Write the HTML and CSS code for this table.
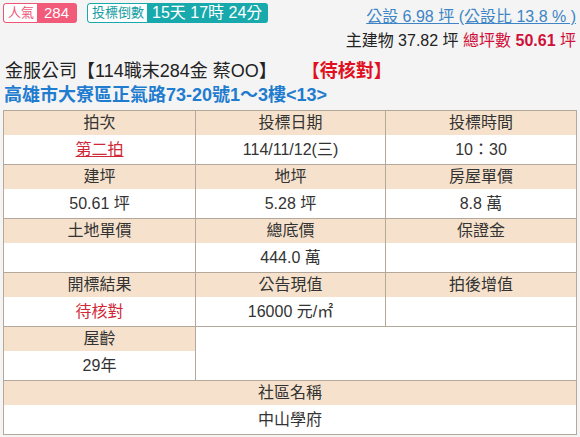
FILE: index.html
```html
<!DOCTYPE html>
<html lang="zh-Hant">
<head>
<meta charset="utf-8">
<link rel="stylesheet" href="styles.css">
</head>
<body>
<div class="top">
  <div class="badges">
    <span class="badge pink"><span class="lbl">人氣</span><span class="val">284</span></span>
    <span class="badge teal"><span class="lbl">投標倒數</span><span class="val">15天 17時 24分</span></span>
  </div>
  <div class="area">
    <div class="pub"><a href="#">公設 6.98 坪 (公設比 13.8 % )</a></div>
    <div class="main">主建物 37.82 坪 <span class="red">總坪數 <b>50.61</b> 坪</span></div>
  </div>
</div>
<div class="title">金服公司【114職末284金 蔡OO】 <span class="status">【待核對】</span></div>
<div class="addr">高雄市大寮區正氣路73-20號1～3樓&lt;13&gt;</div>
<div class="grid">
  <div class="cell"><div class="h">拍次</div><div class="v"><a class="link" href="#">第二拍</a></div></div>
  <div class="cell"><div class="h">投標日期</div><div class="v">114/11/12(三)</div></div>
  <div class="cell"><div class="h">投標時間</div><div class="v">10：30</div></div>
  <div class="cell"><div class="h">建坪</div><div class="v">50.61 坪</div></div>
  <div class="cell"><div class="h">地坪</div><div class="v">5.28 坪</div></div>
  <div class="cell"><div class="h">房屋單價</div><div class="v">8.8 萬</div></div>
  <div class="cell"><div class="h">土地單價</div><div class="v"></div></div>
  <div class="cell"><div class="h">總底價</div><div class="v">444.0 萬</div></div>
  <div class="cell"><div class="h">保證金</div><div class="v"></div></div>
  <div class="cell"><div class="h">開標結果</div><div class="v redtxt">待核對</div></div>
  <div class="cell"><div class="h">公告現值</div><div class="v">16000 元/㎡</div></div>
  <div class="cell"><div class="h">拍後增值</div><div class="v"></div></div>
  <div class="cell"><div class="h">屋齡</div><div class="v">29年</div></div>
  <div class="cell span2 blank"></div>
  <div class="cell span3"><div class="h">社區名稱</div><div class="v">中山學府</div></div>
</div>
</body>
</html>
```
FILE: styles.css
```css
html, body { margin: 0; padding: 0; }
body {
  margin: 3px;
  background: #f4f4f4;
  font-family: "Liberation Sans", "Noto Sans CJK TC", sans-serif;
  color: #222;
}
.top {
  display: flex;
  justify-content: space-between;
  align-items: flex-start;
  height: 56px;
}
.badges { display: flex; gap: 10px; }
.badge {
  display: flex;
  height: 20px;
  border-radius: 3px;
  overflow: hidden;
}
.badge .lbl {
  background: #fff;
  font-size: 13px;
  line-height: 18px;
  padding: 0 3px 0 4px;
  border-radius: 3px 0 0 3px;
  white-space: nowrap;
}
.badge .val {
  color: #fff;
  font-size: 15px;
  line-height: 20px;
  white-space: nowrap;
}
.pink .lbl { color: #ef5676; border: 1px solid #ef5676; border-right: 0; }
.pink .val { background: #f25a79; padding: 0 8px 0 7px; }
.teal .lbl { color: #139ea3; border: 1px solid #18a9ad; border-right: 0; }
.teal .val { background: #18a9ad; font-size: 16px; padding: 0 6px 0 5px; }
.area { text-align: right; padding-top: 3px; padding-right: 1px; }
.pub { font-size: 16px; line-height: 22px; }
.pub a { color: #3d85c6; text-decoration: underline; }
.main { font-size: 16px; line-height: 22px; margin-top: 2px; }
.red { color: #d0103a; }
.red b { font-weight: bold; }
.title {
  font-size: 18px;
  line-height: 24px;
  color: #222;
  padding-left: 2px;
}
.status { color: #e01020; margin-left: 20px; font-weight: bold; }
.addr {
  font-size: 18px;
  line-height: 24px;
  font-weight: bold;
  color: #1f7ccf;
  padding-left: 1px;
  margin-bottom: 3px;
}
.grid {
  display: grid;
  grid-template-columns: 192px 190px 1fr;
  border-top: 1px solid #b3a899;
  border-left: 1px solid #b3a899;
  width: 573px;
  font-size: 16px;
  color: #333;
}
.cell {
  border-right: 1px solid #b3a899;
  border-bottom: 1px solid #b3a899;
  text-align: center;
  background: #fff;
}
.h { background: #f6e2cc; height: 24px; line-height: 24px; }
.v { background: #fff; height: 29px; line-height: 29px; }
.span2 { grid-column: span 2; }
.span3 { grid-column: span 3; }
.link { color: #d02838; text-decoration: underline; }
.redtxt { color: #d02838; }
```
